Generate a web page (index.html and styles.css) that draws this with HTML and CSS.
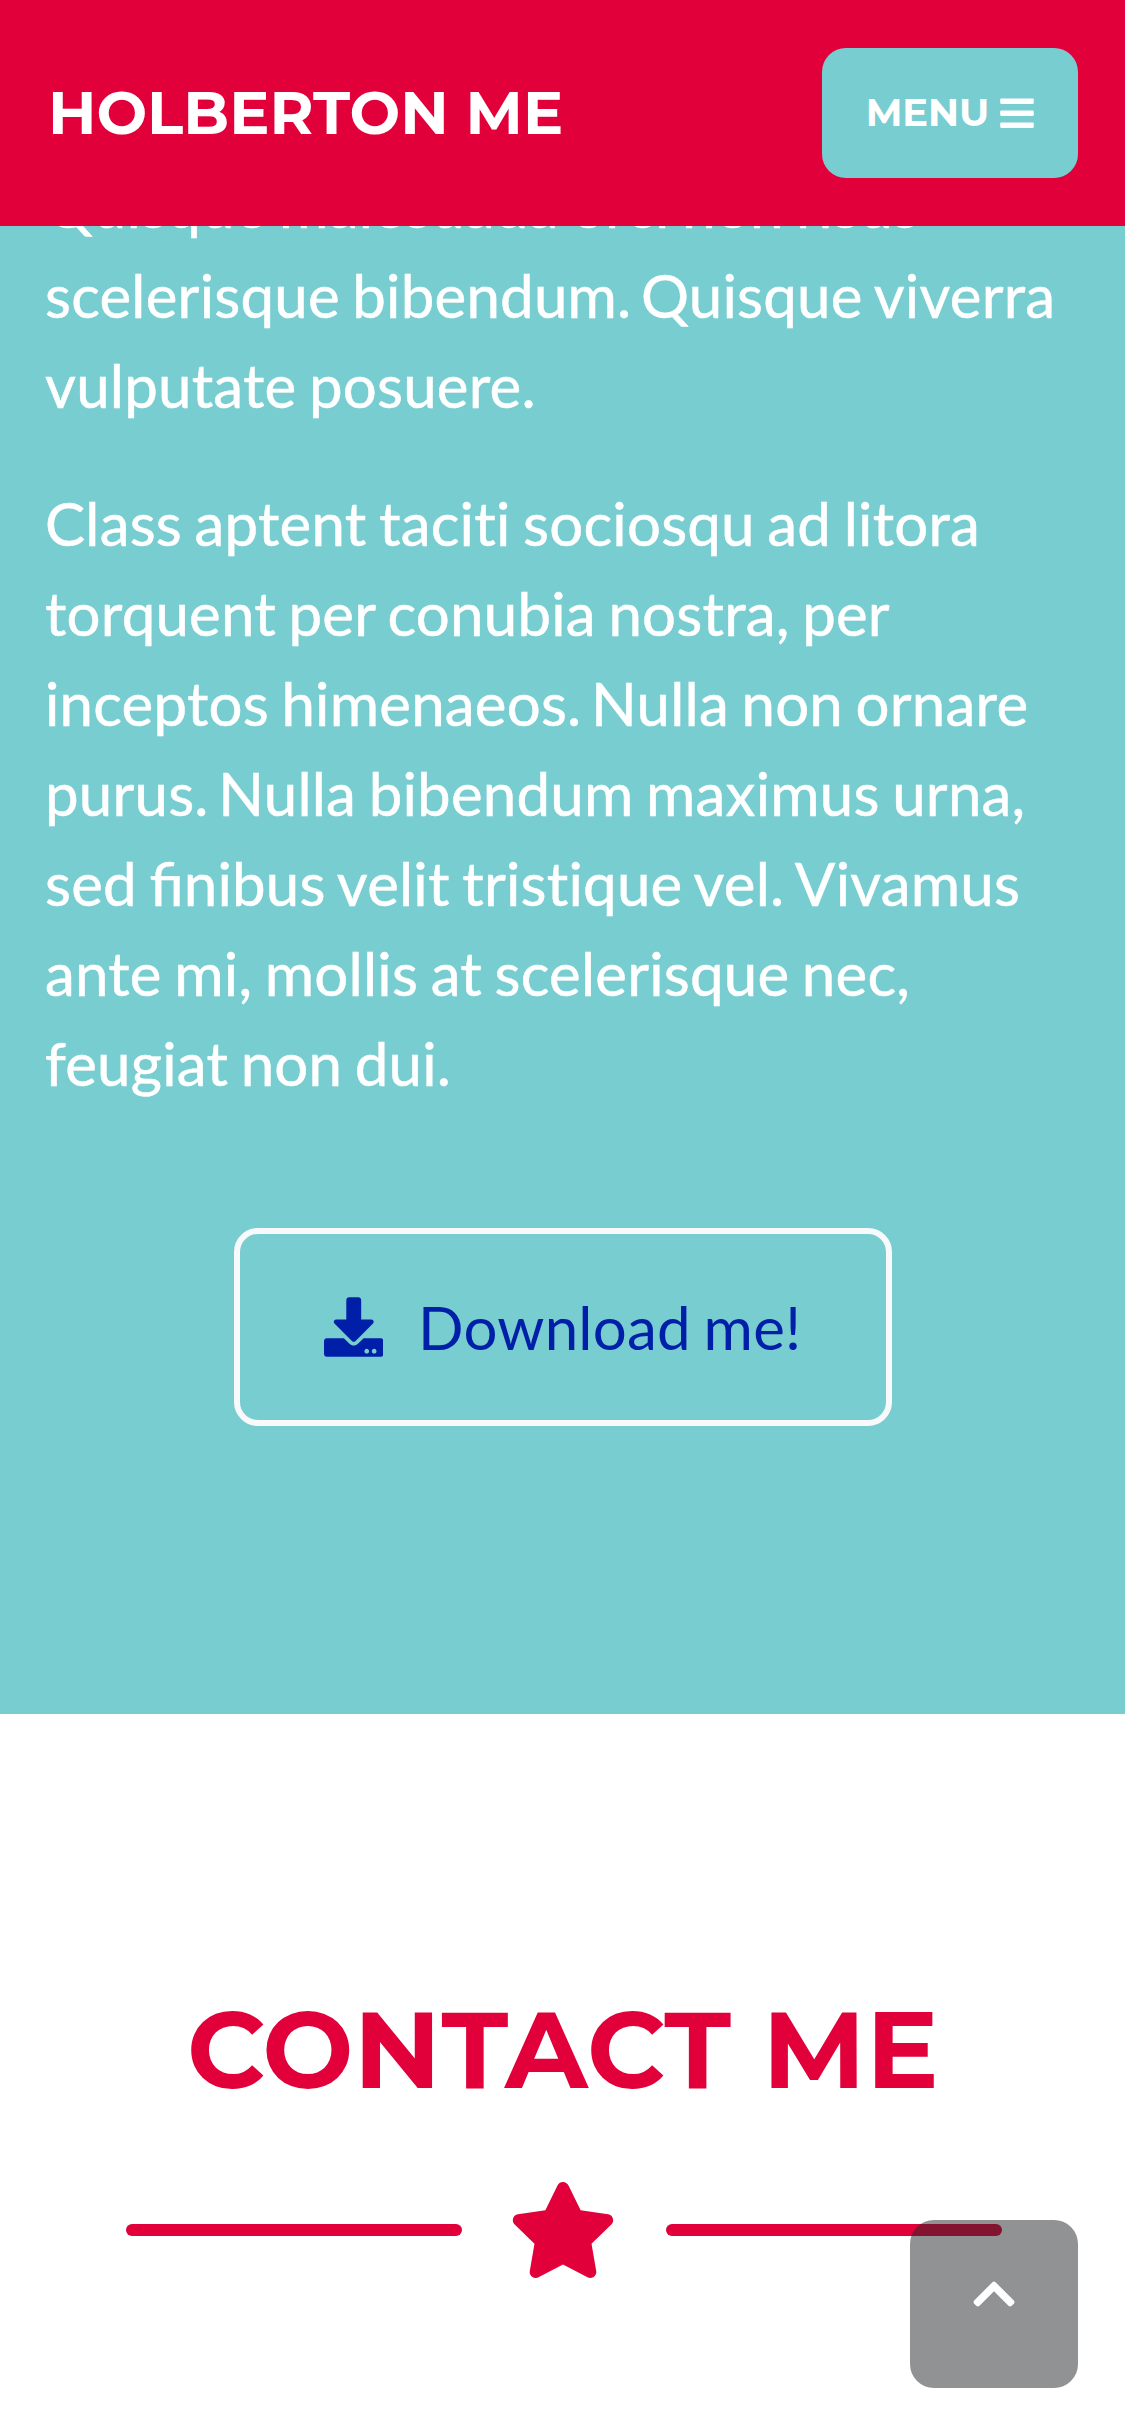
FILE: index.html
```html
<!DOCTYPE html>
<html lang="en">
<head>
<meta charset="utf-8">
<title>Holberton Me</title>
<link rel="stylesheet" href="styles.css">
</head>
<body>
<nav class="navbar">
  <a class="brand">HOLBERTON ME</a>
  <button class="menu-button" type="button"><span class="menu-label">MENU</span>
    <svg class="menu-icon" viewBox="0 0 448 512"><path d="M16 132h416c8.837 0 16-7.163 16-16V76c0-8.837-7.163-16-16-16H16C7.163 60 0 67.163 0 76v40c0 8.837 7.163 16 16 16zm0 160h416c8.837 0 16-7.163 16-16v-40c0-8.837-7.163-16-16-16H16c-8.837 0-16 7.163-16 16v40c0 8.837 7.163 16 16 16zm0 160h416c8.837 0 16-7.163 16-16v-40c0-8.837-7.163-16-16-16H16c-8.837 0-16 7.163-16 16v40c0 8.837 7.163 16 16 16z"/></svg>
  </button>
</nav>
<section class="about">
  <p class="lead">Quisque malesuada orci non risus<br>scelerisque bibendum.<span class="stop-gap"> </span>Quisque viverra<br>vulputate posuere.</p>
  <p class="lead">Class aptent taciti sociosqu ad litora<br>torquent per conubia nostra, per<br>inceptos himenaeos.<span class="stop-gap"> </span>Nulla non ornare<br>purus.<span class="stop-gap"> </span>Nulla bibendum maximus urna,<br>sed <span class="ligature">fi</span>nibus velit tristique vel. Vivamus<br>ante mi, mollis at scelerisque nec,<br>feugiat non dui.</p>
  <a class="download">
    <svg class="download-icon" viewBox="0 0 512 512"><path d="M216 0h80c13.300 0 24 10.700 24 24v168h87.700c17.800 0 26.700 21.500 14.100 34.100L269.700 378.300c-7.500 7.500-19.800 7.500-27.300 0L90.100 226.100c-12.600-12.600-3.700-34.100 14.100-34.100H192V24c0-13.300 10.700-24 24-24zm296 376v112c0 13.300-10.700 24-24 24H24c-13.300 0-24-10.700-24-24V376c0-13.300 10.700-24 24-24h146.700l49 49c20.100 20.100 52.500 20.100 72.600 0l49-49H488c13.300 0 24 10.700 24 24zm-124 88c0-11-9-20-20-20s-20 9-20 20 9 20 20 20 20-9 20-20zm64 0c0-11-9-20-20-20s-20 9-20 20 9 20 20 20 20-9 20-20z"/></svg>
    <span class="download-label">Download me!</span>
  </a>
</section>
<section class="contact">
  <h2 class="contact-title">CONTACT ME</h2>
  <div class="divider">
    <span class="divider-line"></span>
    <svg class="divider-icon" viewBox="0 0 576 512"><path d="M259.300 17.800L194 150.200 47.900 171.500c-26.200 3.800-36.700 36.100-17.700 54.600l105.700 103-25 145.500c-4.500 26.300 23.200 46 46.400 33.700L288 439.600l130.700 68.700c23.200 12.200 50.900-7.400 46.400-33.700l-25-145.500 105.700-103c19-18.500 8.500-50.800-17.700-54.600L382 150.200 316.700 17.800c-11.700-23.600-45.600-23.900-57.400 0z"/></svg>
    <span class="divider-line"></span>
  </div>
</section>
<a class="to-top">
  <svg class="to-top-icon" viewBox="0 0 448 512"><path d="M240.971 130.524l194.343 194.343c9.373 9.373 9.373 24.569 0 33.941l-22.667 22.667c-9.357 9.357-24.522 9.375-33.901.04L224 227.495 69.255 381.516c-9.379 9.335-24.544 9.317-33.901-.04l-22.667-22.667c-9.373-9.373-9.373-24.569 0-33.941L207.030 130.525c9.372-9.373 24.568-9.373 33.941-.001z"/></svg>
</a>
</body>
</html>
```

FILE: styles.css
```css
* { box-sizing: border-box; }

body {
  margin: 0;
  height: 2436px;
  overflow: hidden;
  background: #fff;
  font-family: Lato, "Liberation Sans", sans-serif;
}

svg { display: block; fill: currentColor; }

.navbar {
  position: relative;
  z-index: 2;
  display: flex;
  align-items: center;
  justify-content: space-between;
  height: 226px;
  padding: 0 47px 0 48px;
  background: #e1003a;
  color: #fff;
}

.brand,
.menu-label,
.contact-title {
  font-family: Montserrat, Lato, "Liberation Sans", sans-serif;
  font-weight: 700;
}

.brand { font-size: 60px; line-height: 90px; }

.menu-button {
  display: flex;
  align-items: center;
  justify-content: center;
  gap: 11px;
  width: 256px;
  height: 130px;
  padding: 0;
  border: 0;
  border-radius: 24px;
  background: #78cdd1;
  color: #fff;
}

.menu-label { font-size: 38.4px; line-height: 58px; }

.menu-icon { width: 34px; height: 38.4px; }

.about {
  display: flex;
  flex-direction: column;
  height: 1488px;
  padding: 0 45px;
  background: #78cdd1;
  color: #fff;
}

.lead {
  margin: 0 0 48px;
  font-size: 60px;
  line-height: 90px;
  letter-spacing: .2px;
  word-spacing: -3px;
  white-space: nowrap;
  -webkit-text-stroke: .5px currentColor;
}

/* Letter-spacing turns ligatures off; this keeps the joined fi. */
.ligature { letter-spacing: 0; }

/* Tighter space between a full stop and the next sentence. */
.stop-gap { word-spacing: -6px; }

/* The first paragraph is scrolled partly under the navbar. */
.lead:first-child { margin-top: -66.5px; }

.download {
  display: flex;
  align-items: center;
  align-self: center;
  gap: 35px;
  width: 658px;
  height: 198px;
  margin-top: 72.5px;
  padding: 0 84px;
  border: 6px solid #f8f9fa;
  border-radius: 24px;
  color: #001fa9;
  font-size: 60px;
  line-height: 90px;
  letter-spacing: .25px;
  word-spacing: -3px;
  white-space: nowrap;
}

.download-icon { width: 60px; height: 60px; }

.download-label { padding-bottom: 1px; }

.contact {
  padding-top: 270px;
  color: #e1003a;
  text-align: center;
}

.contact-title {
  margin: 0;
  padding-left: 1px;
  font-size: 108px;
  line-height: 130px;
  letter-spacing: .45px;
  white-space: nowrap;
}

.divider {
  display: flex;
  align-items: center;
  justify-content: center;
  gap: 48px;
  margin-top: 68px;
  padding-left: 3px;
}

.divider-line {
  width: 336px;
  height: 12px;
  border-radius: 6px;
  background: currentColor;
}

.divider-icon { width: 108px; height: 96px; margin: 0 1px 0 -1px; }

.to-top {
  position: fixed;
  right: 47px;
  bottom: 48px;
  z-index: 3;
  display: flex;
  justify-content: center;
  width: 168px;
  height: 168px;
  padding-top: 50px;
  border-radius: 24px;
  background: rgba(35, 37, 39, .5);
  color: #fff;
}

.to-top-icon { width: 42px; height: 48px; }
```
